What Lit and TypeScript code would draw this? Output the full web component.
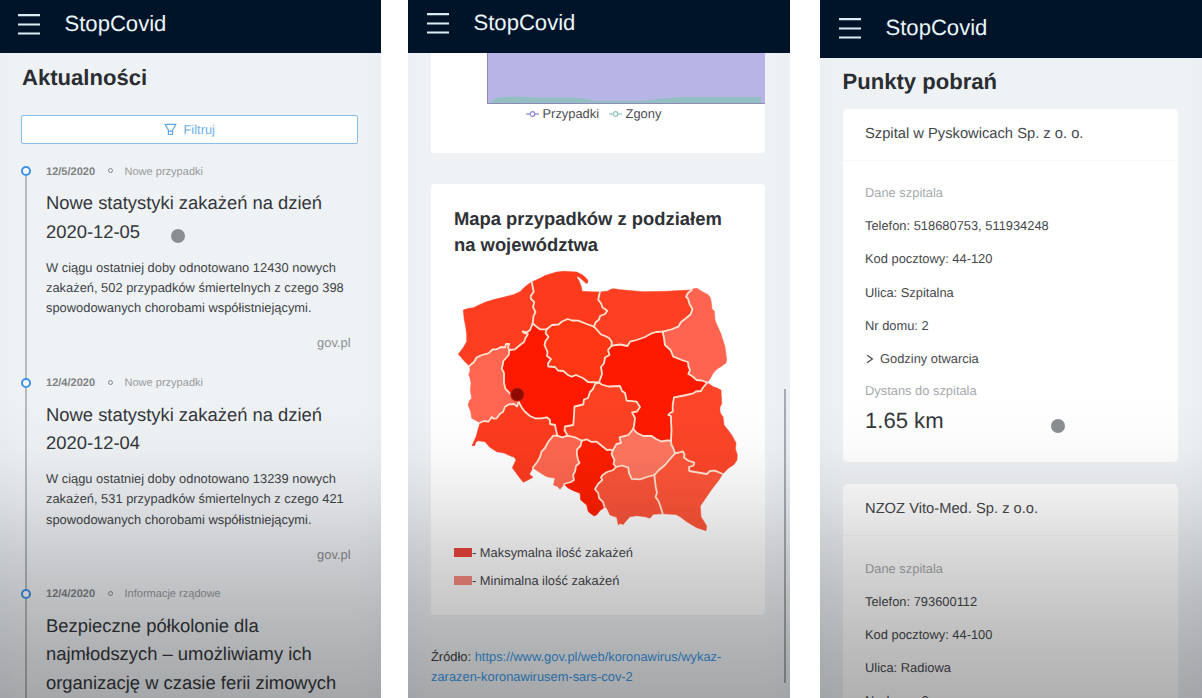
import { LitElement, html, svg, css } from "lit";
import { customElement, property } from "lit/decorators.js";

type Point = [number, number];

const parse = (s: string): Point[] =>
  s.trim().split(/\s+/).map((p) => p.split(",").map(Number) as Point);

/* Border lines of the voivodeships; every line is shared by the areas that touch it. */
const LINES: Record<string, string> = {
  coastZp: "469.3,366 464,360.7 458.3,354 463,348 466.7,341.7 466.7,334 465.7,326.7 464,318 463.3,310 468,308.5 473.3,307.7 479,305 485,302.3 494,299.5 503.3,297.3 513.3,294.7 520,291.7 525,286.7 528,284.5 531.7,282",
  coastPm: "531.7,282 540,278.3 545,275.5 550,274 556.7,272 564,271.3 571.7,271.7 576.7,272 581.7,274.5 585,277 587.7,280 587.7,283 586,283.3 583.3,280.7 579.3,277.3 576.7,276 577.5,278.5 579,280.7 581.3,286.7 582,291.3 590,291.7 600,292",
  northWm: "600,292 608,291 610.7,289.3 613,288.7 623.3,290 643.3,291.7 666.7,291.3 680,290.5 691.7,290",
  eastPd: "691.7,290 694,288.5 697,288.3 703.3,292.3 708,294.5 710.5,298 711.7,305 712,309 714.3,311 715,320 717,325 720.7,333.3 725,346.7 726.7,360 726,363 722,366 716.7,369.3 713,373.5 710,379 707.3,382.7",
  eastLu: "707.3,382.7 713.3,386.7 717,388 721,390 721.7,403.3 719.8,408 720.3,413 723,417 724,425 728,430 731.7,435 736,443 735.5,449 737.3,455 737,460 734,464.5 728.3,468.3 722.7,474",
  southPk: "722.7,474 719,480 712,489 706.7,496.7 700.3,506 701,516.7 706.7,526 706,530.7 696.7,527.7 686.7,521.7 680,516.7 676,514.5 671.7,514.3 662.7,513.7",
  southMp: "662.7,513.7 653.3,514.3 650,518.3 645,516.7 636.7,515.7 630,516.7 626,521 623.3,524.5 620,523.5 618.3,525 616.7,517.3 610,515 606.7,508 604.5,507",
  southSl: "604.5,507 603.3,508.3 600,510.5 597,514.5 594,516 588.3,511.7 586.7,505 580.7,500 580,493.3 573.3,490.7 568,488 564,484",
  southOp: "564,484 562,487 560,489.3 557.5,486.5 553.5,485 555,478.3 546.7,476.7 540,472.7 532.7,467.7",
  southDs: "532.7,467.7 531,471.5 529.3,474 533,477.3 528,480 523.3,482.3 518.3,476 512.3,467.7 516,460 514,457 511.7,456.5 504,453 496.7,451.7 489.5,447 485,441.7 478.3,440.7 476,442 474.5,445.7 472,445.7 476,436.7 480,422.7",
  westLb: "480,422.7 471.7,418.3 470.7,411.7 468,405 469.5,400.5 471.7,398.3 470.3,390 471,383.3 470,378 468.7,375 470.2,370 469.3,366",
  zpPm: "531.7,282 533.7,291.7 530.7,296 531,299 534.3,302 533,307 535.5,312 533.5,316 532.7,323.3",
  zpWp: "532.7,323.3 530,330 527,332.3 522.5,331.3 524,333 528,334 525.5,338 524,342 520,345 515,349.3 509.3,350",
  zpLb: "509.3,350 508,347 509.3,344 506,344 505,347.3 501,347 496.7,349.3 492.5,349.5 488.3,353.3 482,355 476.7,357.3 474,362 469.3,366",
  lbWp: "509.3,350 508.7,355 507,357 503.3,361 502.7,365 501.7,368.3 504,373 504,383 505.5,389 510,393.3 513,398 518.7,402",
  lbDs: "518.7,402 517,406.5 514,404 509,404.3 505,406.7 503,412 500,413.7 496.7,418.3 494,418.7 491.7,417 490,419.5 488.3,421.7 484,421 480,422.7",
  wpDs: "518.7,402 522,408 525,411.7 530,416 535,418.3 541,418.3 546.7,417.3 550,420 550,424 555,425 556,430 557.3,435.7",
  dsOp: "557.3,435.7 553.3,435.7 550.5,439 548.3,441.7 545,448 541.7,451.3 540,457 537.3,461.7 532.7,467.7",
  wpOp: "557.3,435.7 562,437.3 567.7,435.7",
  opLd: "567.7,435.7 575,437.3 581.7,440.7",
  opSl: "581.7,440.7 580.5,446 577,449.5 576.8,454 578,460 579.5,463 576,466 575,471.7 573,475 574,480 571,482 564,484",
  ldSl: "581.7,440.7 586.7,439.3 591,441.8 596.7,441.7 602,446 607,450 610,449.7 612.7,450.5",
  slSk: "612.7,450.5 611.5,454 614.5,460 613.5,464 616,467",
  slMp: "616,467 613.3,470 607,472 602.7,475 601,477.5 602.3,480 598,484 595,489.3 598.3,493 599,498 603,502 604.5,507",
  skMp: "616,467 622,465.5 628.3,467.7 629,473 631.7,478.8 640,479.3 647,477 654.3,475",
  mpPk: "654.3,475 655.7,486.7 657,493 655.5,497 658.5,501 661,508.3 662.7,513.7",
  skPk: "654.3,475 659,470 665,465 670,459 675,453.3",
  pkLu: "675,453.3 679,452.5 682.7,451.3 684.5,454.5 684,457.5 688,460.5 694.3,462.7 693.5,465.5 689,467 689.3,471 698,472.5 706.7,474 710,471 715,470.7 722.7,474",
  skLu: "671,440.7 671.5,445 673.3,448.3 675,453.3",
  mzSk: "633.3,429 637,433 643.3,436 651.7,436 656,439 661.7,441.5 667,440.3 671,440.7",
  ldSk: "633.3,429 628.3,435 623,436.3 619.5,437.3 621,443 616.5,444 612.7,450.5",
  mzLu: "671,440.7 671.5,430 671,420 671,416 668.3,415 670,413 672.7,411.7 672.7,405 674,397.3 684,395.5 693.3,393.3 696,391.5 701,391 703,387.5 707.3,382.7",
  mzPd: "707.3,382.7 702,380.5 696.7,380 692,376 688.3,374 690,370 688.5,366.7 688,362 681.7,360 673.3,356.7 670.5,350 665,345 664,338 662.7,331.7",
  pdWm: "662.7,331.7 671,329.5 678.3,326.7 681,322 685,319 690.5,314.5 692.5,309 689.5,304 688,298.5 686,296.7 688,293 691.7,290",
  mzWm: "662.7,331.7 656,332 651.7,333.3 645,337 636.7,340 630,341.7 627.5,346 620,344.5 611.7,345.7",
  wmKj: "611.7,345.7 611.7,341.7 609,338 605,336 601,334.5 597.5,330.5 594,326.7",
  pmWm: "594,326.7 595.5,322.5 599,319.5 600,316 605,314 607.3,310.7 602.5,307.5 601,303.3 598.3,300 599,295.5 600,292",
  pmKj: "594,326.7 586.7,324 578.3,320.7 572,320.5 567.7,319 562,321.5 558.5,324.5 552,325 546.7,329.3",
  pmWp: "546.7,329.3 540,329.3 535,325.5 532.7,323.3",
  kjWp: "546.7,329.3 545.5,333 548.5,337 545.5,341 544.5,345 547.5,352 547,356 551,359 548,363.5 548.3,366.5 555,367 558,370.5 563.3,371 568,375 571.7,376.7 576,375 583.3,378.3 588,382 599,382.5",
  kjMz: "599,382.5 602,374 601,367 604,363.3 605,357.5 609.5,355 608,350 611.7,345.7",
  ldMz: "599,382.5 601.7,384.5 608.3,386.5 620,386 622,391 625,393 626.7,400.7 636.7,401.7 640,407 637,411.5 632,412.3 635,418 634.3,424 633.3,429",
  wpLd: "599,382.5 595,384 593,389 590,392 588,398 584,399.5 583.3,404.5 574.5,406.5 574,415 573.3,425 565,426.5 564.5,430 567.7,435.7",
};

/* Each area as a ring of border lines; a leading minus walks the line backwards. */
const AREAS: { fill: string; ring: string }[] = [
  { fill: "#fd3d20", ring: "coastZp zpPm zpWp zpLb" },
  { fill: "#fd3a1b", ring: "coastPm -pmWm pmKj pmWp -zpPm" },
  { fill: "#fd4023", ring: "northWm -pdWm mzWm wmKj pmWm" },
  { fill: "#ff6451", ring: "eastPd mzPd pdWm" },
  { fill: "#ff6652", ring: "-zpLb lbWp lbDs westLb" },
  { fill: "#fe1a00", ring: "-zpWp -pmWp kjWp wpLd -wpOp -wpDs -lbWp" },
  { fill: "#fd3613", ring: "-pmKj -wmKj -kjMz -kjWp" },
  { fill: "#fd1a00", ring: "-mzWm -mzPd -mzLu -mzSk -ldMz kjMz" },
  { fill: "#fd4123", ring: "ldMz ldSk -ldSl -opLd -wpLd" },
  { fill: "#fd4529", ring: "eastLu -pkLu -skLu mzLu" },
  { fill: "#fd3b1e", ring: "-lbDs wpDs dsOp southDs" },
  { fill: "#ff6750", ring: "wpOp opLd opSl southOp -dsOp" },
  { fill: "#ff1e00", ring: "ldSl slSk slMp southSl -opSl" },
  { fill: "#ff755f", ring: "mzSk skLu -skPk -skMp -slSk -ldSk" },
  { fill: "#fc5439", ring: "skMp mpPk southMp -slMp" },
  { fill: "#ff5538", ring: "skPk pkLu southPk -mpPk" },
];

const walk = (ring: string): string =>
  ring
    .split(" ")
    .flatMap((k) => (k[0] === "-" ? parse(LINES[k.slice(1)]).reverse() : parse(LINES[k])))
    .map((p) => p.join(","))
    .join(" ");

const INNER = Object.keys(LINES).filter((k) => !/^(coast|north|east|south|west)/.test(k));

const shared = css`
  * { box-sizing: border-box; }
  h1, h2, h3, p, ul { margin: 0; padding: 0; font-weight: 400; }
  h1 { font-size: 22.08px; line-height: 30px; font-weight: 700; color: #2a2d31; }
`;

@customElement("app-bar")
class AppBar extends LitElement {
  static styles = [shared, css`
    :host { display: flex; align-items: center; flex: none; background: #001429; color: #e9f5fa; padding-left: 18px; gap: 24.5px; }
    svg { display: block; width: 22px; height: 22px; }
    .brand { font-size: 22.08px; line-height: 24px; }
  `];
  render() {
    return html`
      <svg viewBox="0 0 22 22" stroke="#d9edf4" stroke-width="2.2"><path d="M0 2.2H22M0 11.5H22M0 20.5H22" /></svg>
      <span class="brand">StopCovid</span>`;
  }
}

@customElement("news-item")
class NewsItem extends LitElement {
  @property() date = "";
  @property() category = "";
  @property() heading = "";
  @property() text = "";
  @property() source = "";
  static styles = [shared, css`
    :host { display: grid; grid-template-columns: 10px 1fr; column-gap: 15px; }
    .rail { display: flex; flex-direction: column; align-items: center; padding-top: 3.6px; }
    .dot { width: 10px; height: 10px; flex: none; border: 2px solid #3a93e8; border-radius: 50%; background: #fff; }
    .line { width: 1.6px; flex: 1; background: #b3b9bd; margin-bottom: -4px; }
    .meta { display: flex; align-items: center; font-size: 11.04px; line-height: 18px; color: #96999b; }
    .meta b { color: #7f8285; width: 61.5px; }
    .sep { width: 5px; height: 5px; border: 1px solid #85888a; border-radius: 50%; margin: -2px 12px 0 0; }
    h3 { font-size: 18.4px; line-height: 28.6px; color: #34373b; margin-top: 8.4px; white-space: pre-line; }
    p { font-size: 12.88px; line-height: 20.24px; color: #404347; margin-top: 11.3px; white-space: pre-line; }
    .src { text-align: right; margin: 14.9px 7px 20.6px 0; color: #8a8d90; }
  `];
  render() {
    return html`
      <div class="rail"><span class="dot"></span><span class="line"></span></div>
      <div>
        <div class="meta"><b>${this.date}</b><span class="sep"></span><span>${this.category}</span></div>
        <h3>${this.heading}</h3>
        ${this.text ? html`<p>${this.text}</p><p class="src">${this.source}</p>` : ""}
      </div>`;
  }
}

@customElement("poland-map")
class PolandMap extends LitElement {
  static styles = css`
    :host { display: block; width: 288px; height: 264px; }
    svg { display: block; }
  `;
  render() {
    return html`<svg width="288" height="264" viewBox="454 268 288 264">
      ${AREAS.map((a) => svg`<polygon points=${walk(a.ring)} fill=${a.fill} stroke=${a.fill} stroke-width=".5" />`)}
      ${INNER.map((k) => svg`<polyline points=${LINES[k]} fill="none" stroke="#ffe3d2" stroke-width="1.8" stroke-linejoin="round" stroke-linecap="round" />`)}
      <circle cx="517.3" cy="394.6" r="6.6" fill="#8f0a02" stroke="#b81a0a" stroke-width="1" />
    </svg>`;
  }
}

@customElement("hospital-card")
class HospitalCard extends LitElement {
  @property() name = "";
  @property({ attribute: false }) rows: string[] = [];
  @property() distance = "";
  static styles = [shared, css`
    :host { display: block; height: 353px; flex: none; background: #fff; border-radius: 5px; font-size: 12.88px; color: #45484c; }
    h2 { font-size: 14.72px; line-height: 22px; padding: 14.4px 0 15px 22.5px; border-bottom: 1px solid rgba(120, 130, 140, .06); color: #44474b; }
    .body { padding: 15.2px 22.5px 0; }
    .row, .label { line-height: 33.2px; }
    .label { color: #a6a9ac; }
    .open { display: flex; align-items: center; gap: 6px; padding-left: 1px; }
    .label.dist { line-height: 31px; }
    .km { font-size: 22.08px; line-height: 28px; color: #34373b; margin-top: .5px; }
  `];
  render() {
    return html`
      <h2>${this.name}</h2>
      <div class="body">
        <p class="label">Dane szpitala</p>
        ${this.rows.map((r) => html`<p class="row">${r}</p>`)}
        ${this.distance
          ? html`<p class="row open">
                <svg width="8" height="10" viewBox="0 0 8 10" fill="none" stroke="#45484c" stroke-width="1.2"><path d="M1.2 1.2L6.4 5L1.2 8.8" /></svg>
                Godziny otwarcia
              </p>
              <p class="label dist">Dystans do szpitala</p>
              <p class="km">${this.distance}</p>`
          : ""}
      </div>`;
  }
}

@customElement("app-root")
class AppRoot extends LitElement {
  static styles = [shared, css`
    :host { display: flex; justify-content: space-between; width: 1202px; height: 698px; overflow: hidden; background: #fff; font-family: "Liberation Sans", Arial, sans-serif; text-rendering: geometricPrecision; }
    .panel { position: relative; display: flex; flex-direction: column; height: 698px; overflow: hidden; background: linear-gradient(90deg, #ebeff3, #eff2f5 24px, #eff2f5 358px, #ebeff3); }
    .panel::after { content: ""; position: absolute; inset: 0; pointer-events: none; background: linear-gradient(180deg, transparent 400px, rgba(0,0,0,.02) 450px, rgba(0,0,0,.075) 500px, rgba(0,0,0,.15) 550px, rgba(0,0,0,.21) 600px, rgba(0,0,0,.265) 650px, rgba(0,0,0,.31) 698px); }
    .news { width: 381px; }
    .stats { width: 382px; margin-left: 1px; margin-right: 4px; }
    .points { width: 382px; }
    .news app-bar { height: 53px; padding-bottom: 6px; }
    .stats app-bar { height: 52.5px; padding-bottom: 7px; padding-left: 19px; }
    .points app-bar { height: 57.5px; padding-bottom: 1.5px; padding-left: 19px; }
    .news-body { padding: 10.2px 23.5px 0 21px; }
    .news-body h1 { padding-left: 1px; }
    .filter { display: flex; align-items: center; justify-content: center; gap: 7px; height: 29.5px; margin: 21.8px 0 18.4px; border: 1px solid #85bdf0; border-radius: 2px; background: #fff; color: #6cafe8; font-size: 12.88px; }
    .touch { position: absolute; width: 14px; height: 14px; border-radius: 50%; background: #8b8e90; }
    .news .touch { left: 171px; top: 229px; }
    .points .touch { left: 230.5px; top: 419px; }
    .stats-body { padding: 0 25px 0 23px; }
    .card { background: #fff; border-radius: 4px; }
    .chart-card { height: 100.5px; border-radius: 0 0 4px 4px; margin-bottom: 31px; }
    .chart { display: block; margin-left: 56px; }
    .legend { display: flex; align-items: center; margin: 0 0 0 95px; line-height: 20px; font-size: 12.88px; color: #4a4d52; }
    .legend svg { margin-right: 3.5px; }
    .legend span { margin-right: 10px; }
    .map-card { height: 431px; padding: 22.4px 0 0 23px; margin-bottom: 31.7px; }
    .map-card h2 { font-size: 18.4px; line-height: 25.76px; font-weight: 700; color: #2f3236; margin-bottom: 10.1px; }
    .key { display: flex; align-items: center; height: 27.4px; font-size: 12.88px; color: #45474a; }
    .keys { padding-top: 7px; }
    .swatch { width: 18px; height: 9px; background: #ee453e; }
    .swatch.min { background: #fb8a82; }
    .source { font-size: 12.88px; line-height: 20.6px; color: #3a3d41; }
    .source a { color: #3a97e6; }
    .scroll { position: absolute; left: 376px; top: 389px; width: 2px; height: 294px; background: #a6aaae; }
    .points-body { display: flex; flex-direction: column; gap: 22.5px; padding: 9.3px 24px 0 22.5px; }
    .points-body h1 { margin-bottom: -10.8px; }
  `];

  render() {
    return html`
      <section class="panel news">
        <app-bar></app-bar>
        <div class="news-body">
          <h1>Aktualności</h1>
          <div class="filter">
            <svg width="13" height="13" viewBox="0 0 13 13" fill="none" stroke="#5aa6e6" stroke-width="1.2" stroke-linejoin="round"><path d="M1 1.3H12L8.6 7V11.5H4.4V7ZM4.4 8.2H8.6" /></svg>
            <span>Filtruj</span>
          </div>
          <news-item date="12/5/2020" category="Nowe przypadki"
            .heading=${"Nowe statystyki zakażeń na dzień\n2020-12-05"}
            .text=${"W ciągu ostatniej doby odnotowano 12430 nowych\nzakażeń, 502 przypadków śmiertelnych z czego 398\nspowodowanych chorobami współistniejącymi."}
            source="gov.pl"></news-item>
          <news-item date="12/4/2020" category="Nowe przypadki"
            .heading=${"Nowe statystyki zakażeń na dzień\n2020-12-04"}
            .text=${"W ciągu ostatniej doby odnotowano 13239 nowych\nzakażeń, 531 przypadków śmiertelnych z czego 421\nspowodowanych chorobami współistniejącymi."}
            source="gov.pl"></news-item>
          <news-item date="12/4/2020" category="Informacje rządowe"
            .heading=${"Bezpieczne półkolonie dla\nnajmłodszych – umożliwiamy ich\norganizację w czasie ferii zimowych"}></news-item>
        </div>
        <span class="touch"></span>
      </section>

      <section class="panel stats">
        <app-bar></app-bar>
        <div class="stats-body">
          <div class="card chart-card">
            <svg class="chart" width="278" height="51" viewBox="0 0 278 51">
              <rect width="278" height="51" fill="#b6b5e6" />
              <path d="M3 51L7 46Q12 43.5 30 43.5L50 44.5H88Q100 45 108 48H155Q170 46 192 44H274V51Z" fill="#94bfc2" />
              <path d="M.5 0V50.5H278" fill="none" stroke="#8f8bb5" />
            </svg>
            <div class="legend">
              <svg width="13" height="8" viewBox="0 0 13 8" fill="#fff" stroke="#8884d8" stroke-width="1.2"><path d="M0 4H13" /><circle cx="6.5" cy="4" r="2.3" /></svg>
              <span>Przypadki</span>
              <svg width="13" height="8" viewBox="0 0 13 8" fill="#fff" stroke="#8cc4bd" stroke-width="1.2"><path d="M0 4H13" /><circle cx="6.5" cy="4" r="2.3" /></svg>
              <span>Zgony</span>
            </div>
          </div>
          <div class="card map-card">
            <h2>Mapa przypadków z podziałem<br />na województwa</h2>
            <poland-map></poland-map>
            <div class="keys">
              <div class="key"><span class="swatch"></span>- Maksymalna ilość zakażeń</div>
              <div class="key"><span class="swatch min"></span>- Minimalna ilość zakażeń</div>
            </div>
          </div>
          <p class="source">Źródło: <a>https://www.gov.pl/web/koronawirus/wykaz-<br />zarazen-koronawirusem-sars-cov-2</a></p>
        </div>
        <span class="scroll"></span>
      </section>

      <section class="panel points">
        <app-bar></app-bar>
        <div class="points-body">
          <h1>Punkty pobrań</h1>
          <hospital-card name="Szpital w Pyskowicach Sp. z o. o." distance="1.65 km"
            .rows=${["Telefon: 518680753, 511934248", "Kod pocztowy: 44-120", "Ulica: Szpitalna", "Nr domu: 2"]}></hospital-card>
          <hospital-card name="NZOZ Vito-Med. Sp. z o.o."
            .rows=${["Telefon: 793600112", "Kod pocztowy: 44-100", "Ulica: Radiowa", "Nr domu: 2"]}></hospital-card>
        </div>
        <span class="touch"></span>
      </section>`;
  }
}
